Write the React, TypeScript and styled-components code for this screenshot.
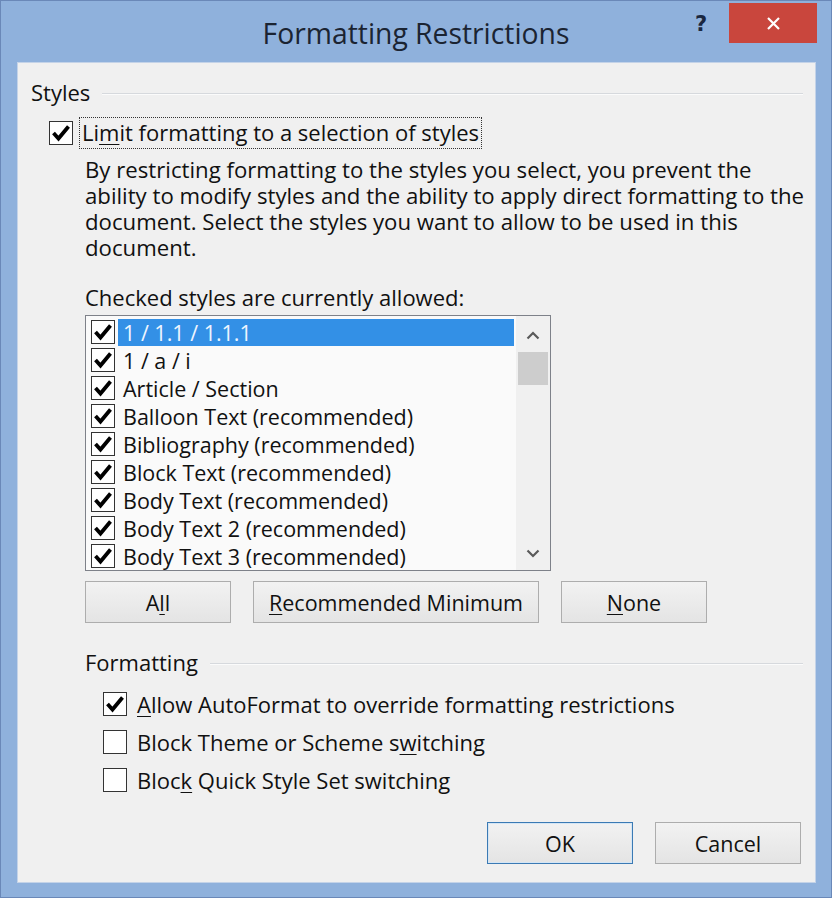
import React from "react";
import styled, { createGlobalStyle } from "styled-components";

const GlobalStyle = createGlobalStyle`
  html, body {
    margin: 0;
    padding: 0;
    background: #8fb1dc;
  }
`;

const Window = styled.div`
  width: 832px;
  height: 898px;
  box-sizing: border-box;
  border: 1px solid #6a88b8;
  background: #8fb1dc;
  display: flex;
  flex-direction: column;
  font-family: "Open Sans", "Noto Sans", sans-serif;
  font-size: 22px;
  color: #111;
`;

const TitleBar = styled.div`
  height: 61px;
  flex: none;
  display: grid;
  grid-template-columns: 1fr auto 1fr;
`;

const Title = styled.div`
  grid-column: 2;
  font-size: 28.3px;
  line-height: 61px;
  padding-top: 2px;
  color: #1b2432;
  white-space: nowrap;
`;

const Caption = styled.div`
  grid-column: 3;
  justify-self: end;
  display: flex;
  align-items: flex-start;
  padding-top: 2px;
  padding-right: 14px;
`;

const HelpButton = styled.div`
  width: 30px;
  height: 40px;
  margin-right: 13px;
  line-height: 42px;
  text-align: center;
  font-family: "DejaVu Sans", sans-serif;
  font-weight: bold;
  font-size: 21px;
  color: #1a2740;
`;

const CloseButton = styled.div`
  width: 88px;
  height: 40px;
  background: #c9463d;
  display: flex;
  align-items: center;
  justify-content: center;
`;

const Client = styled.div`
  flex: 1;
  margin: 0 15px 14px 16px;
  background: #f0f0f0;
  border: 1px solid #c4d3e8;
  padding: 15px 12px 0 13px;
  display: flex;
  flex-direction: column;
`;

const SectionHeader = styled.div<{ $indent?: number; $top?: number }>`
  display: flex;
  align-items: center;
  gap: 12px;
  height: 28px;
  margin-left: ${(p) => p.$indent ?? 0}px;
  margin-top: ${(p) => p.$top ?? 0}px;
`;

const Rule = styled.div`
  flex: 1;
  height: 1px;
  background: #d6d9dd;
  box-shadow: 0 1px 0 #fbfbfb;
  margin-top: 2px;
`;

const CheckRow = styled.div<{ $indent: number; $top: number; $height: number }>`
  display: flex;
  align-items: center;
  height: ${(p) => p.$height}px;
  margin-left: ${(p) => p.$indent}px;
  margin-top: ${(p) => p.$top}px;
`;

const Box = styled.span`
  flex: none;
  width: 24px;
  height: 24px;
  box-sizing: border-box;
  border: 1px solid #333;
  background: #fff;
  display: flex;
  align-items: center;
  justify-content: center;
`;

const FocusLabel = styled.span`
  margin-left: 6px;
  height: 32px;
  box-sizing: border-box;
  padding: 0 3px;
  outline: 1px dotted #333;
  outline-offset: -1px;
  line-height: 31px;
  white-space: nowrap;
`;

const Label = styled.span`
  margin-left: 10px;
  white-space: nowrap;
`;

const Key = styled.span`
  text-decoration: underline;
  text-underline-offset: 3px;
  text-decoration-thickness: 1px;
`;

const Indented = styled.div`
  margin-left: 54px;
  display: flex;
  flex-direction: column;
`;

const Description = styled.p`
  margin: 8px 0 0;
  font-size: 22.2px;
  line-height: 26px;
  white-space: nowrap;
`;

const ListCaption = styled.div`
  margin-top: 22px;
  line-height: 28px;
  white-space: nowrap;
`;

const ListBox = styled.div`
  margin-top: 4px;
  width: 466px;
  height: 256px;
  box-sizing: border-box;
  border: 1px solid #7e8189;
  background: #fafafa;
  display: flex;
  font-size: 21.5px;
`;

const Items = styled.div`
  flex: 1;
  padding: 2px 2px 0 5px;
  display: flex;
  flex-direction: column;
  overflow: hidden;
`;

const Item = styled.div`
  height: 28px;
  flex: none;
  display: flex;
  align-items: center;
  gap: 3px;
`;

const ItemText = styled.span<{ $selected?: boolean }>`
  flex: 1;
  height: 27px;
  line-height: 27px;
  padding-left: 5px;
  white-space: nowrap;
  background: ${(p) => (p.$selected ? "#3390e6" : "transparent")};
  color: ${(p) => (p.$selected ? "#eef5ff" : "#111")};
`;

const ScrollBar = styled.div`
  width: 34px;
  flex: none;
  background: #f0f0f0;
  display: flex;
  flex-direction: column;
  padding: 2px 0 0;
  box-sizing: border-box;
`;

const Arrow = styled.div`
  height: 34px;
  flex: none;
  display: flex;
  align-items: center;
  justify-content: center;
`;

const Thumb = styled.div`
  height: 33px;
  margin: 0 2px;
  background: #cdcdcd;
`;

const Track = styled.div`
  flex: 1;
`;

const ButtonRow = styled.div<{ $top: number; $end?: boolean }>`
  display: flex;
  gap: 22px;
  margin-top: ${(p) => p.$top}px;
  justify-content: ${(p) => (p.$end ? "flex-end" : "flex-start")};
  padding-right: ${(p) => (p.$end ? 2 : 0)}px;
`;

const Button = styled.div<{ $width?: number; $default?: boolean }>`
  width: ${(p) => p.$width ?? 146}px;
  height: 42px;
  box-sizing: border-box;
  border: 1px solid ${(p) => (p.$default ? "#3b7ab4" : "#adadad")};
  box-shadow: ${(p) => (p.$default ? "inset 0 0 0 1px #d5e6f5" : "none")};
  background: linear-gradient(#f2f2f2, #e4e4e4);
  display: flex;
  align-items: center;
  justify-content: center;
  color: #111;
  font-size: 21.5px;
  white-space: nowrap;
`;

const Check = () => (
  <svg width="22" height="22" viewBox="0 0 22 22">
    <polyline
      points="3.5,11 8.5,16.5 18.5,4.5"
      fill="none"
      stroke="#000"
      strokeWidth="3.8"
      strokeLinejoin="miter"
    />
  </svg>
);

const Chevron = ({ up }: { up?: boolean }) => (
  <svg width="14" height="9" viewBox="0 0 14 9">
    <polyline
      points={up ? "1.5,7.5 7,2 12.5,7.5" : "1.5,1.5 7,7 12.5,1.5"}
      fill="none"
      stroke="#5a5a5a"
      strokeWidth="2.2"
    />
  </svg>
);

const styles = [
  "1 / 1.1 / 1.1.1",
  "1 / a / i",
  "Article / Section",
  "Balloon Text (recommended)",
  "Bibliography (recommended)",
  "Block Text (recommended)",
  "Body Text (recommended)",
  "Body Text 2 (recommended)",
  "Body Text 3 (recommended)",
];

export default function App() {
  return (
    <>
      <GlobalStyle />
      <Window>
        <TitleBar>
          <Title>Formatting Restrictions</Title>
          <Caption>
            <HelpButton>?</HelpButton>
            <CloseButton>
              <svg width="15" height="15" viewBox="0 0 15 15">
                <path d="M2 2 L13 13 M13 2 L2 13" stroke="#fff" strokeWidth="2.2" />
              </svg>
            </CloseButton>
          </Caption>
        </TitleBar>

        <Client>
          <SectionHeader>
            <span>Styles</span>
            <Rule />
          </SectionHeader>

          <CheckRow $indent={18} $top={11} $height={32}>
            <Box>
              <Check />
            </Box>
            <FocusLabel>
              Li<Key>m</Key>it formatting to a selection of styles
            </FocusLabel>
          </CheckRow>

          <Indented>
            <Description>
              By restricting formatting to the styles you select, you prevent the
              <br />
              ability to modify styles and the ability to apply direct formatting to the
              <br />
              document. Select the styles you want to allow to be used in this
              <br />
              document.
            </Description>

            <ListCaption>Checked styles are currently allowed:</ListCaption>

            <ListBox>
              <Items>
                {styles.map((s, i) => (
                  <Item key={s}>
                    <Box>
                      <Check />
                    </Box>
                    <ItemText $selected={i === 0}>{s}</ItemText>
                  </Item>
                ))}
              </Items>
              <ScrollBar>
                <Arrow>
                  <Chevron up />
                </Arrow>
                <Thumb />
                <Track />
                <Arrow>
                  <Chevron />
                </Arrow>
              </ScrollBar>
            </ListBox>

            <ButtonRow $top={10}>
              <Button>
                A<Key>l</Key>l
              </Button>
              <Button $width={286}>
                <Key>R</Key>ecommended Minimum
              </Button>
              <Button>
                <Key>N</Key>one
              </Button>
            </ButtonRow>
          </Indented>

          <SectionHeader $indent={54} $top={25}>
            <span>Formatting</span>
            <Rule />
          </SectionHeader>

          <CheckRow $indent={72} $top={9} $height={38}>
            <Box>
              <Check />
            </Box>
            <Label>
              <Key>A</Key>llow AutoFormat to override formatting restrictions
            </Label>
          </CheckRow>
          <CheckRow $indent={72} $top={0} $height={38}>
            <Box />
            <Label>
              Block Theme or Scheme s<Key>w</Key>itching
            </Label>
          </CheckRow>
          <CheckRow $indent={72} $top={0} $height={38}>
            <Box />
            <Label>
              Bloc<Key>k</Key> Quick Style Set switching
            </Label>
          </CheckRow>

          <ButtonRow $top={23} $end>
            <Button $default>OK</Button>
            <Button>Cancel</Button>
          </ButtonRow>
        </Client>
      </Window>
    </>
  );
}
